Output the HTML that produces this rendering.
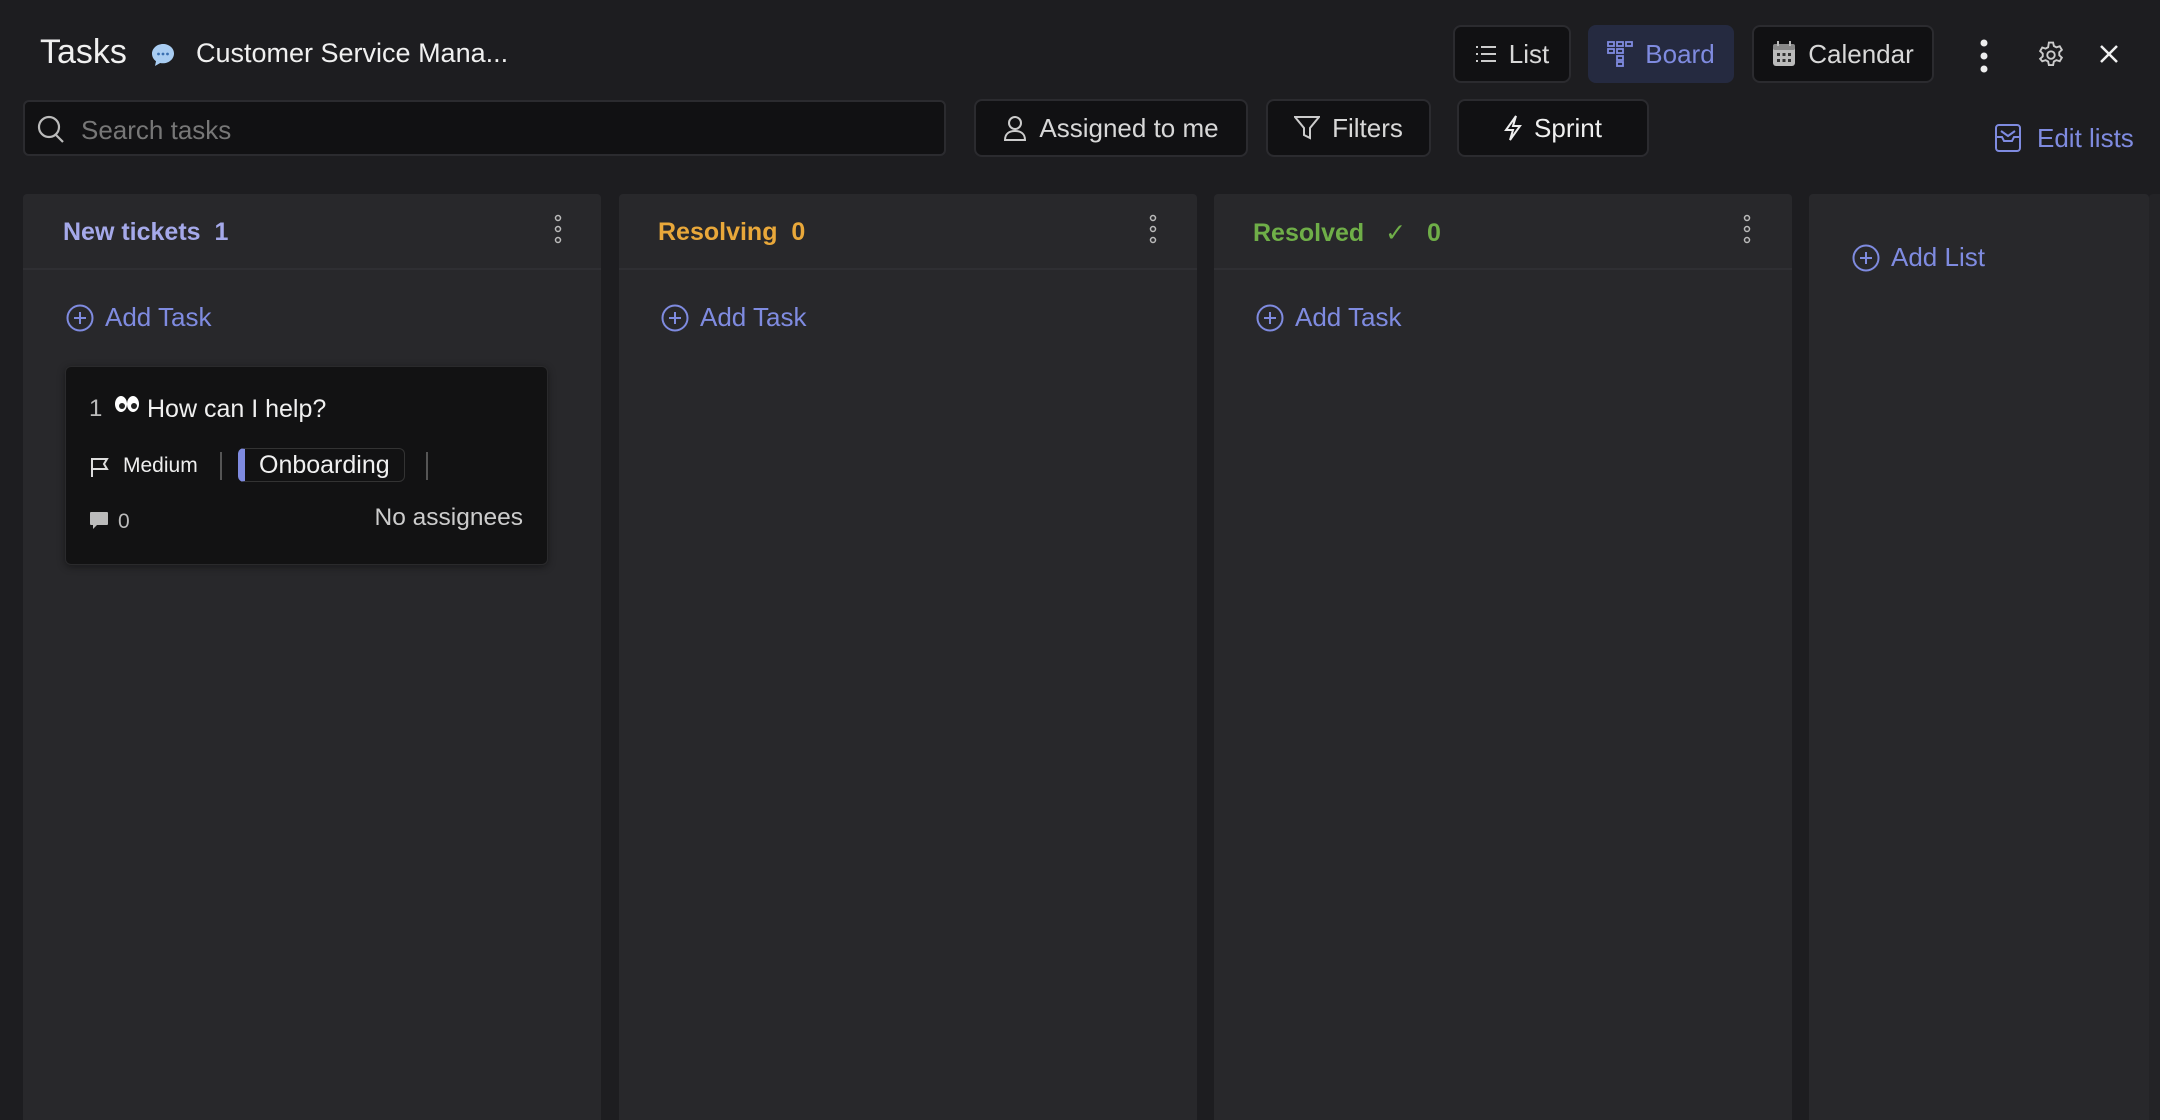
<!DOCTYPE html>
<html><head><meta charset="utf-8"><style>
*{box-sizing:border-box;margin:0;padding:0}
body{width:2160px;height:1120px;background:#1d1d20;font-family:"Liberation Sans",sans-serif;color:#e6e6e6;position:relative;overflow:hidden}
.a{position:absolute}
.btn{position:absolute;background:#111113;border:2px solid #2b2b2f;border-radius:8px;display:flex;align-items:center;justify-content:center;gap:12px;font-size:26px;color:#d8d8d8}
.col{position:absolute;top:194px;bottom:0;background:#28282b;border-radius:4px 4px 0 0}
.hd{position:absolute;left:0;right:0;top:0;height:76px;border-bottom:2px solid #2f2f33}
.ttl{position:absolute;left:40px;top:24px;font-size:25px;font-weight:bold}
.dots{position:absolute;top:20px;width:10px}
.add{position:absolute;display:flex;align-items:center;gap:11px;color:#7f8be0;font-size:26px}
</style></head><body>
<div class="a" style="left:40px;top:33px;font-size:34px;color:#f0f0f0">Tasks</div>
<svg class="a" style="left:150px;top:42px" width="26" height="26" viewBox="0 0 26 26"><path d="M13 2C6.9 2 2 6.4 2 11.8c0 3 1.6 5.7 4 7.5L5 24l5.2-3c.9.2 1.8.3 2.8.3 6.1 0 11-4.4 11-9.8S19.1 2 13 2z" fill="#a9cdf2"/><circle cx="8.5" cy="12" r="1.4" fill="#3a6fb0"/><circle cx="13" cy="12" r="1.4" fill="#3a6fb0"/><circle cx="17.5" cy="12" r="1.4" fill="#3a6fb0"/></svg>
<div class="a" style="left:196px;top:38px;font-size:27px;color:#f0f0f0">Customer Service Mana...</div>

<div class="btn" style="left:1453px;top:25px;width:118px;height:58px"><svg width="22" height="18" viewBox="0 0 22 18" stroke="#ccc" stroke-width="2"><path d="M1 2h2M1 9h2M1 16h2M6 2h15M6 9h15M6 16h15"/></svg>List</div>
<div class="btn" style="left:1588px;top:25px;width:146px;height:58px;background:#252a40;border-color:#252a40;color:#7f8be0"><svg width="26" height="26" viewBox="0 0 26 26" fill="none" stroke="#7f8be0" stroke-width="1.8"><rect x="1" y="1" width="6" height="4"/><rect x="10" y="1" width="6" height="4"/><rect x="19" y="1" width="6" height="4"/><rect x="1" y="8" width="6" height="4"/><rect x="10" y="8" width="6" height="4"/><rect x="10" y="15" width="6" height="4"/><rect x="10" y="21" width="6" height="4"/></svg>Board</div>
<div class="btn" style="left:1752px;top:25px;width:182px;height:58px"><svg width="24" height="26" viewBox="0 0 24 26"><rect x="1" y="3" width="22" height="22" rx="3" fill="#bbb"/><rect x="1" y="3" width="22" height="6" rx="2" fill="#888"/><g fill="#333"><rect x="5" y="12" width="3" height="3"/><rect x="10.5" y="12" width="3" height="3"/><rect x="16" y="12" width="3" height="3"/><rect x="5" y="18" width="3" height="3"/><rect x="10.5" y="18" width="3" height="3"/><rect x="16" y="18" width="3" height="3"/></g><rect x="5" y="0" width="2" height="5" fill="#bbb"/><rect x="17" y="0" width="2" height="5" fill="#bbb"/></svg>Calendar</div>
<svg class="a" style="left:1978px;top:38px" width="12" height="36"><circle cx="6" cy="5" r="3.5" fill="#eee"/><circle cx="6" cy="18" r="3.5" fill="#eee"/><circle cx="6" cy="31" r="3.5" fill="#eee"/></svg>
<svg class="a" style="left:2036px;top:39px" width="30" height="32" viewBox="0 0 24 24" fill="none" stroke="#ccc" stroke-width="1.5"><path d="M10.3 2h3.4l.6 2.8 2 1.1 2.7-.9 1.7 2.9-2.1 1.9v2.4l2.1 1.9-1.7 2.9-2.7-.9-2 1.1-.6 2.8h-3.4l-.6-2.8-2-1.1-2.7.9L3.3 15.1l2.1-1.9v-2.4L3.3 8.9 5 6l2.7.9 2-1.1z"/><circle cx="12" cy="12" r="3"/></svg>
<svg class="a" style="left:2099px;top:44px" width="20" height="20" stroke="#f0f0f0" stroke-width="2.5"><path d="M2 2l16 16M18 2L2 18"/></svg>

<div class="a" style="left:23px;top:100px;width:923px;height:56px;background:#111113;border:2px solid #2b2b2f;border-radius:6px"></div>
<svg class="a" style="left:37px;top:115px" width="28" height="30" fill="none" stroke="#bbb" stroke-width="2.2"><circle cx="12" cy="12" r="10"/><path d="M19 20l7 7"/></svg>
<div class="a" style="left:81px;top:115px;font-size:26px;color:#777">Search tasks</div>

<div class="btn" style="left:974px;top:99px;width:274px;height:58px"><svg width="24" height="26" fill="none" stroke="#ccc" stroke-width="2"><circle cx="12" cy="8" r="6"/><path d="M2 25c0-6 4-9 10-9s10 3 10 9z"/></svg>Assigned to me</div>
<div class="btn" style="left:1266px;top:99px;width:165px;height:58px"><svg width="26" height="24" fill="none" stroke="#ccc" stroke-width="2"><path d="M1 1h24l-9 11v10l-6-3v-7z"/></svg>Filters</div>
<div class="btn" style="left:1457px;top:99px;width:192px;height:58px;color:#f0f0f0"><svg width="18" height="26" fill="none" stroke="#eee" stroke-width="2"><path d="M12 1L2 15h7l-3 10 10-14H9z"/></svg>Sprint</div>

<svg class="a" style="left:1995px;top:124px" width="26" height="28" fill="none" stroke="#7f8be0" stroke-width="2"><rect x="1" y="1" width="24" height="26" rx="3"/><path d="M1 13h6l2 4h8l2-4h6M6 7l7 5 7-5"/></svg>
<div class="a" style="left:2037px;top:123px;font-size:26px;color:#7f8be0">Edit lists</div>

<div class="col" style="left:23px;width:578px"><div class="hd"></div><div class="ttl" style="color:#a5a9ea">New tickets&nbsp;&nbsp;1</div>
<svg class="dots" style="left:530px" height="32"><circle cx="5" cy="4" r="2.5" fill="none" stroke="#bbb" stroke-width="1.5"/><circle cx="5" cy="15" r="2.5" fill="none" stroke="#bbb" stroke-width="1.5"/><circle cx="5" cy="26" r="2.5" fill="none" stroke="#bbb" stroke-width="1.5"/></svg></div>
<div class="col" style="left:619px;width:578px"><div class="hd"></div><div class="ttl" style="left:39px;color:#e9a83a">Resolving&nbsp;&nbsp;0</div>
<svg class="dots" style="left:529px" height="32"><circle cx="5" cy="4" r="2.5" fill="none" stroke="#bbb" stroke-width="1.5"/><circle cx="5" cy="15" r="2.5" fill="none" stroke="#bbb" stroke-width="1.5"/><circle cx="5" cy="26" r="2.5" fill="none" stroke="#bbb" stroke-width="1.5"/></svg></div>
<div class="col" style="left:1214px;width:578px"><div class="hd"></div><div class="ttl" style="left:39px;color:#6fae48">Resolved <span style="font-weight:normal;margin:0 14px">✓</span> 0</div>
<svg class="dots" style="left:528px" height="32"><circle cx="5" cy="4" r="2.5" fill="none" stroke="#bbb" stroke-width="1.5"/><circle cx="5" cy="15" r="2.5" fill="none" stroke="#bbb" stroke-width="1.5"/><circle cx="5" cy="26" r="2.5" fill="none" stroke="#bbb" stroke-width="1.5"/></svg></div>
<div class="col" style="left:1809px;width:340px"></div>
<div class="col" style="left:2149px;width:20px;background:#232326"></div>

<div class="add" style="left:66px;top:302px"><svg width="28" height="28" fill="none" stroke="#7f8be0" stroke-width="2"><circle cx="14" cy="14" r="12.5"/><path d="M14 8v12M8 14h12"/></svg>Add Task</div>
<div class="add" style="left:661px;top:302px"><svg width="28" height="28" fill="none" stroke="#7f8be0" stroke-width="2"><circle cx="14" cy="14" r="12.5"/><path d="M14 8v12M8 14h12"/></svg>Add Task</div>
<div class="add" style="left:1256px;top:302px"><svg width="28" height="28" fill="none" stroke="#7f8be0" stroke-width="2"><circle cx="14" cy="14" r="12.5"/><path d="M14 8v12M8 14h12"/></svg>Add Task</div>
<div class="add" style="left:1852px;top:242px"><svg width="28" height="28" fill="none" stroke="#7f8be0" stroke-width="2"><circle cx="14" cy="14" r="12.5"/><path d="M14 8v12M8 14h12"/></svg>Add List</div>

<div class="a" style="left:65px;top:366px;width:483px;height:199px;background:#121213;border:1px solid #2a2a2c;border-radius:6px;box-shadow:0 2px 8px rgba(0,0,0,.4)"></div>
<div class="a" style="left:89px;top:395px;font-size:24px;color:#bbb">1</div>
<svg class="a" style="left:114px;top:394px" width="26" height="20"><ellipse cx="7" cy="10" rx="6" ry="8" fill="#fff"/><ellipse cx="19" cy="10" rx="6" ry="8" fill="#fff"/><circle cx="8" cy="12" r="3" fill="#222"/><circle cx="20" cy="12" r="3" fill="#222"/></svg>
<div class="a" style="left:147px;top:395px;font-size:25px;color:#f0f0f0">How can I help?</div>
<svg class="a" style="left:90px;top:456px" width="20" height="22" fill="none" stroke="#ddd" stroke-width="2"><path d="M2 21V3h15l-3 5 3 5H2"/></svg>
<div class="a" style="left:123px;top:454px;font-size:21px;color:#eee">Medium</div>
<div class="a" style="left:220px;top:452px;width:2px;height:28px;background:#555"></div>
<div class="a" style="left:238px;top:448px;width:167px;height:34px;border:1px solid #333;border-left:7px solid #7f8be0;border-radius:6px;font-size:25px;color:#f0f0f0;padding:2px 0 0 14px">Onboarding</div>
<div class="a" style="left:426px;top:452px;width:2px;height:28px;background:#555"></div>
<svg class="a" style="left:89px;top:511px" width="20" height="20"><path d="M2 1h16a1 1 0 0 1 1 1v11a1 1 0 0 1-1 1H8l-4 4v-4H2a1 1 0 0 1-1-1V2a1 1 0 0 1 1-1z" fill="#bbb"/></svg>
<div class="a" style="left:118px;top:510px;font-size:21px;color:#bbb">0</div>
<div class="a" style="left:290px;top:504px;width:233px;text-align:right;font-size:24.5px;color:#ccc">No assignees</div>
</body></html>
